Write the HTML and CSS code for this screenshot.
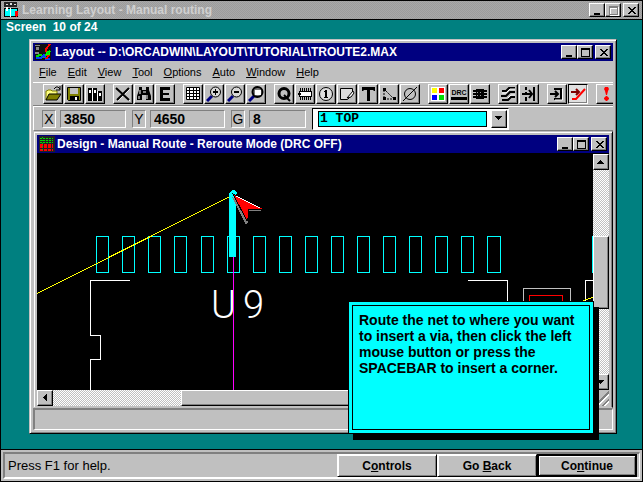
FILE: index.html
```html
<!DOCTYPE html>
<html lang="en">
<head>
<meta charset="utf-8">
<title>Learning Layout - Manual routing</title>
<link rel="stylesheet" href="styles.css">
</head>
<body>
<div class="app">
  <header class="app-title">
    <svg class="app-icon" width="16" height="16" viewBox="0 0 16 16" shape-rendering="crispEdges"><path d="M1 0h13v5H1z" fill="#222"/><path d="M3 2h2v1H3zM7 1h2v2H7zM11 2h2v1h-2z" fill="#ddd"/><path d="M1 6h5l2 1 2-1h4v8h-4l-2 1-2-1H1z" fill="#0ff" stroke="#000"/><path d="M7 6h1v9H7zM3 5h2v4H3z" fill="#fff"/><path d="M12 9h3v5h-1v1h-1v-1h-1z" fill="#f00"/></svg>
    <h1>Learning Layout - Manual routing</h1>
    <div class="caption-buttons">
      <button class="cap" aria-label="Minimize"><svg width="10" height="9"><path d="M1 7h6v2H1z"/></svg></button>
      <button class="cap off" aria-label="Maximize"><svg width="10" height="9"><path d="M0 0h9v9H0zM1 2v6h7V2z" fill-rule="evenodd"/></svg></button>
      <button class="cap close" aria-label="Close"><svg width="10" height="9"><path d="M1 1h2v1h1v1h2V2h1V1h2v1H8v1H7v1H6v1h1v1h1v1h1v1H7V7H6V6H4v1H3v1H1V7h1V6h1V5h1V4H3V3H2V2H1z"/></svg></button>
    </div>
  </header>

  <main class="desktop">
    <p class="progress">Screen&nbsp; 10 of 24</p>

    <section class="window">
      <header class="title-bar">
        <svg width="18" height="16" viewBox="0 0 18 16" shape-rendering="crispEdges"><path d="M0 0h16v16H0z" fill="#111"/><path d="M0 1h5v1H0zM1 3h3v3H1zM0 8h4v2H0z" fill="#888"/><path d="M1 12l5-1 3 2 3-3 3-3" stroke="#0d0" stroke-width="2" fill="none"/><circle cx="13" cy="9" r="2" fill="none" stroke="#0f0"/><path d="M1 14h5l3-3 2 4h4" stroke="#04f" stroke-width="2" fill="none"/><path d="M15 0l-4 5v3M14 11l-3 4" stroke="#f00" stroke-width="2" fill="none"/></svg>
        <h2>Layout -- D:\ORCADWIN\LAYOUT\TUTORIAL\TROUTE2.MAX</h2>
        <div class="caption-buttons">
          <button class="cap" aria-label="Minimize"><svg width="10" height="9"><path d="M1 7h6v2H1z"/></svg></button>
          <button class="cap" aria-label="Maximize"><svg width="10" height="9"><path d="M0 0h9v9H0zM1 2v6h7V2z" fill-rule="evenodd"/></svg></button>
          <button class="cap close" aria-label="Close"><svg width="10" height="9"><path d="M1 1h2v1h1v1h2V2h1V1h2v1H8v1H7v1H6v1h1v1h1v1h1v1H7V7H6V6H4v1H3v1H1V7h1V6h1V5h1V4H3V3H2V2H1z"/></svg></button>
        </div>
      </header>

      <nav class="menu">
        <button><u>F</u>ile</button><button><u>E</u>dit</button><button><u>V</u>iew</button><button><u>T</u>ool</button><button><u>O</u>ptions</button><button><u>A</u>uto</button><button><u>W</u>indow</button><button><u>H</u>elp</button>
      </nav>

      <div class="toolbar">
        <div class="group">
          <button aria-label="Open"><svg viewBox="0 0 16 16"><path d="M1 14V5h1l1-1h3l1 1h5v3" fill="#ffff80" stroke="#808000"/><path d="M1 14l3-6h12l-4 6z" fill="#808000" stroke="#000"/><path d="M9 3l2-2h2l2 2M15 0v4h-4" fill="none" stroke="#000"/></svg></button>
          <button aria-label="Save"><svg viewBox="0 0 16 16"><path d="M1.500 1.500h13v13h-12l-1-1z" fill="#808000" stroke="#000"/><path d="M4 2h8v6H4z" fill="#c0c0c0"/><path d="M4 10h9v4H4z"/><path d="M9 11h2v3H9z" fill="#fff"/></svg></button>
          <button aria-label="Library"><svg viewBox="0 0 16 16"><path d="M1 2h4v13H1zM6 2h4v13H6zM11 5h4v10h-4z"/><path d="M2 4h2v3H2zM7 4h2v3H7zM12 7h2v3h-2zM5 2h1v13H5zM10 5h1v10h-1z" fill="#fff"/></svg></button>
        </div>
        <div class="group">
          <button aria-label="Delete"><svg viewBox="0 0 16 16"><path d="M2 3l13 12M3 15L15 3" stroke="#fff"/><path d="M1 2l13 12M2 14L14 2" stroke="#000" stroke-width="2"/></svg></button>
          <button aria-label="Find"><svg viewBox="0 0 16 16"><path d="M3 1h3v3h4V1h3v3l2 6v4h-5V9H6v5H1v-4l2-6z"/><path d="M4 4v4M3 10v3M9 5v2M11 9v4M7 6h1" stroke="#fff" fill="none"/></svg></button>
          <button aria-label="Edit"><svg viewBox="0 0 16 16"><path d="M3 1h10v3H6v3h6v2H6v3h7v3H3z"/></svg></button>
        </div>
        <div class="group">
          <button aria-label="Spreadsheet"><svg viewBox="0 0 16 16"><path d="M2 2h13v12H2z" fill="#fff"/><path d="M1.500 1.500h13v12h-13zM1 4.500h14M1 7.500h14M1 10.500h14M4.500 1v13M8.500 1v13M11.500 1v13" fill="none" stroke="#000"/></svg></button>
          <button aria-label="Zoom in"><svg viewBox="0 0 16 16"><path d="M6 10l-5 5" stroke="#000080" stroke-width="3"/><circle cx="9.500" cy="6" r="5" fill="#d8d8d8" stroke="#000"/><path d="M9 3h1v6H9zM7 5h5v2H7z"/></svg></button>
          <button aria-label="Zoom out"><svg viewBox="0 0 16 16"><path d="M6 10l-5 5" stroke="#000080" stroke-width="3"/><circle cx="9.500" cy="6" r="5" fill="#d8d8d8" stroke="#000"/><path d="M7 5h5v2H7z"/></svg></button>
          <button aria-label="Zoom all"><svg viewBox="0 0 16 16"><path d="M6 10l-5 5" stroke="#000080" stroke-width="3"/><circle cx="9.500" cy="6" r="5" fill="#777" stroke="#000" stroke-width="2"/><path d="M7 4h6v5H7z" fill="#fff"/></svg></button>
        </div>
        <div class="group">
          <button aria-label="Query"><svg viewBox="0 0 16 16"><circle cx="8" cy="7.500" r="5" fill="none" stroke="#000" stroke-width="3"/><path d="M8 9l6 6" stroke="#000" stroke-width="2"/></svg></button>
          <button aria-label="Component"><svg viewBox="0 0 16 16" shape-rendering="crispEdges"><path d="M3.500 2v12M5.500 2v12M7.500 2v12M9.500 2v12M11.500 2v12M13.500 2v12" stroke="#000"/><path d="M2 5h13v6H2z"/><path d="M3 6h11v4H3z" fill="#fff"/><path d="M1 7h3v2H1z"/></svg></button>
          <button aria-label="Pin"><svg viewBox="0 0 16 16"><circle cx="8" cy="8" r="6.500" fill="#ddd" stroke="#000"/><path d="M7 4h2v7h1v1H6v-1h1V6H6V5h1z"/></svg></button>
          <button aria-label="Obstacle"><svg viewBox="0 0 16 16"><path d="M1.500 2.500h12v6l-5 5h-7z" fill="#ddd" stroke="#000"/><path d="M14 5l-6 7 4-1 3-4z" fill="#fff" stroke="#000"/></svg></button>
          <button aria-label="Text"><svg viewBox="0 0 16 16"><path d="M2 1h13v4h-1l-1-1h-3v11H7V4H4L3 5H2z"/></svg></button>
          <button aria-label="Connection"><svg viewBox="0 0 16 16"><path d="M3 4v9h11M3 3l10 10" fill="none" stroke="#000" stroke-dasharray="2 1"/><path d="M2 2h3v3H2zM2 11h3v3H2zM12 11h3v3h-3z"/></svg></button>
          <button aria-label="Error"><svg viewBox="0 0 16 16"><circle cx="8" cy="8" r="5.500" fill="none" stroke="#000"/><path d="M1 15L15 1" stroke="#000"/></svg></button>
        </div>
        <div class="group">
          <button aria-label="Color"><svg viewBox="0 0 16 16"><path d="M1 1h14v14H1z" fill="#fff"/><path d="M2 2h5v5H2z" fill="#ff0"/><path d="M9 2h5v5H9z" fill="#f00"/><path d="M2 9h5v5H2z" fill="#00f"/><path d="M9 9h5v5H9z" fill="#0d0"/></svg></button>
          <button class="drc"><span>DRC</span></button>
          <button aria-label="Reconnect"><svg viewBox="0 0 16 16" shape-rendering="crispEdges"><path d="M1 4h14v2H1zM1 7h14v2H1zM1 10h14v2H1zM4 3h8v10H4z"/><path d="M5 6.500h1M8 6.500h1M5 9.500h1M8 9.500h1" stroke="#999"/></svg></button>
        </div>
        <div class="group">
          <button aria-label="Auto path route"><svg viewBox="0 0 16 16"><path d="M2 5h4l3-3h6M1 10h5l4-4h5M2 14h6l3-3h4" fill="none" stroke="#000" stroke-width="2"/><path d="M2 7h4l4-4h5M8 12l3-3h4" fill="none" stroke="#fff"/></svg></button>
          <button aria-label="Shove track"><svg viewBox="0 0 16 16"><path d="M5 1v3M5 6v3M5 11v4M13 1v14" stroke="#000" stroke-width="2"/><path d="M1 8h10M8 4l3 4-3 4" fill="none" stroke="#000" stroke-width="2"/></svg></button>
        </div>
        <div class="group">
          <button aria-label="Edit segment"><svg viewBox="0 0 16 16"><path d="M5 3h7v10H5M1 8h8M6 5l3 3-3 3" fill="none" stroke="#000" stroke-width="2"/><path d="M13.500 3v11H6" fill="none" stroke="#fff"/></svg></button>
          <button class="pressed" aria-label="Add/Edit route"><svg viewBox="0 0 16 16"><path d="M1 6h8M6 3l3 3-3 3" fill="none" stroke="#800000" stroke-width="2"/><path d="M2 13h4l9-10" fill="none" stroke="#f00" stroke-width="2"/></svg></button>
        </div>
        <div class="group">
          <button aria-label="Design rule check"><svg viewBox="0 0 16 16"><path d="M7 1h3l1 2-1 2-1 4H8L7 5 6 3zM7 11l1-1h1l2 2v1l-2 2H8l-2-2v-1z" fill="#f00"/></svg></button>
        </div>
      </div>

      <div class="coords">
        <label for="x">X</label><input id="x" class="w-x" value="3850">
        <label for="y">Y</label><input id="y" class="w-y" value="4650">
        <label for="g">G</label><input id="g" class="w-g" value="8">
        <div class="layer">
          <select aria-label="Layer"><option>1 TOP</option></select>
          <span class="drop" aria-hidden="true"><svg width="8" height="5"><path d="M0 0h7v1H6v1H5v1H4v1H3V3H2V2H1V1H0z"/></svg></span>
        </div>
      </div>

      <section class="design">
        <header class="title-bar">
          <svg width="16" height="16" viewBox="0 0 16 16" shape-rendering="crispEdges"><path d="M0 0h16v16H0z" fill="#222"/><path d="M1 2h13M1 4h13M1 6h13" stroke="#0d0" stroke-dasharray="2 1"/><path d="M1 9h13M1 11h13M1 14h13" stroke="#f00" stroke-width="2" stroke-dasharray="3 1"/><path d="M3 1v14" stroke="#0c0" stroke-dasharray="1 2"/></svg>
          <h2>Design - Manual Route - Reroute Mode (DRC OFF)</h2>
          <div class="caption-buttons">
            <button class="cap" aria-label="Minimize"><svg width="10" height="9"><path d="M1 7h6v2H1z"/></svg></button>
            <button class="cap" aria-label="Maximize"><svg width="10" height="9"><path d="M0 0h9v9H0zM1 2v6h7V2z" fill-rule="evenodd"/></svg></button>
            <button class="cap close" aria-label="Close"><svg width="10" height="9"><path d="M1 1h2v1h1v1h2V2h1V1h2v1H8v1H7v1H6v1h1v1h1v1h1v1H7V7H6V6H4v1H3v1H1V7h1V6h1V5h1V4H3V3H2V2H1z"/></svg></button>
          </div>
        </header>
        <div class="view">
          <svg class="board" shape-rendering="crispEdges">
            <g transform="translate(-37 -154)" fill="none">
              <path stroke="#0ff" d="M96.500 236.500h12v36h-12zM122.500 236.500h12v36h-12zM148.500 236.500h12v36h-12zM174.500 236.500h12v36h-12zM201.500 236.500h12v36h-12zM227.500 236.500h12v36h-12zM253.500 236.500h12v36h-12zM279.500 236.500h12v36h-12zM305.500 236.500h12v36h-12zM331.500 236.500h12v36h-12zM357.500 236.500h12v36h-12zM383.500 236.500h12v36h-12zM409.500 236.500h12v36h-12zM435.500 236.500h12v36h-12zM461.500 236.500h12v36h-12zM487.500 236.500h13v36h-13zM592.500 236v37"/>
              <path stroke="#fff" d="M130 280.500H90.500V335.500H100.500V359.500H90.500V391M468 280.500H507.500V391M593 280.500H585.500V391"/>
              <path stroke="#c0c0c0" d="M523.500 391V288.500H570.500V391"/>
              <path stroke="#f00" d="M529.500 391V295.500H562.500V391"/>
              <path stroke="#ff0" d="M37 293.500L232 195.500M583 300.500L593 297.500"/>
              <text class="refdes" y="318"><tspan x="211">U</tspan><tspan x="243">9</tspan></text>
              <path stroke="#f0f" d="M233.500 257V391"/>
              <path fill="#0ff" d="M229 257V193l3-3h2l3 3-1 2v62z"/>
              <path fill="#808080" d="M232 197l14 28 2-3-9-20 11 9h11v-2z"/>
              <path fill="#f00" stroke="#000" d="M233 194l30 15h-15l-1 12z"/>
              <path fill="#f00" d="M235 196l28 13h-15v10z"/>
              <path stroke="#fff" d="M236 196l24 12"/>
            </g>
          </svg>
          <div class="vscroll">
            <button class="arrow" aria-label="Scroll up"><svg width="8" height="5"><path d="M3 0h1v1h1v1h1v1h1v1H0V3h1V2h1V1h1z"/></svg></button>
            <div class="thumb"></div>
            <button class="arrow" aria-label="Scroll down"><svg width="8" height="5"><path d="M0 0h7v1H6v1H5v1H4v1H3V3H2V2H1V1H0z"/></svg></button>
          </div>
          <div class="hscroll">
            <button class="arrow" aria-label="Scroll left"><svg width="5" height="8"><path d="M0 3h1V2h1V1h1V0h1v7H3V6H2V5H1V4H0z"/></svg></button>
            <div class="thumb"></div>
            <button class="arrow" aria-label="Scroll right"><svg width="5" height="8"><path d="M0 0h1v1h1v1h1v1h1v1H3v1H2v1H1v1H0z"/></svg></button>
          </div>
          <div class="grip"></div>
        </div>
      </section>
      <div class="status"></div>
    </section>

    <aside class="hint"><p>Route the net to where you want to insert a via, then click the left mouse button or press the SPACEBAR to insert a corner.</p></aside>
  </main>

  <footer class="footer">
    <div class="footer-panel">
      <p>Press F1 for help.</p>
      <div class="actions">
        <button>C<u>o</u>ntrols</button>
        <button>Go <u>B</u>ack</button>
        <button class="default">Co<u>n</u>tinue</button>
      </div>
    </div>
  </footer>
</div>
</body>
</html>
```

FILE: styles.css
```css
* { box-sizing: border-box; }
body {
  margin: 0;
  font: 12px/16px "Liberation Sans", Arial, sans-serif;
  color: #000;
}
h1, h2, p { margin: 0; font-size: inherit; }
button, input, select { font: inherit; color: inherit; padding: 0; margin: 0; border-radius: 0; }
button { background: #c0c0c0; border: 0; }
u { text-underline-offset: 1px; }
svg { display: block; flex: none; }

.app {
  min-height: 100vh;
  display: flex;
  flex-direction: column;
  border: 1px solid #000;
  background: #008080;
}
.app-title {
  display: flex;
  align-items: center;
  height: 19px;
  padding: 0 3px 0 2px;
  background: repeating-conic-gradient(#a8a8a8 0 25%, #9c9c9c 0 50%) 0 0 / 2px 2px;
  border-bottom: 1px solid #000;
}
.app-title h1 { flex: 1; padding-left: 3px; color: #d0d0d0; }

.caption-buttons { display: flex; }
.cap {
  width: 16px;
  height: 14px;
  padding: 2px 3px;
  border: 1px solid;
  border-color: #fff #000 #000 #fff;
  box-shadow: inset -1px -1px #808080;
}
.cap.close { margin-left: 2px; }
.cap.off svg { fill: #808080; filter: drop-shadow(1px 1px #fff); }

.desktop {
  position: relative;
  flex: 1;
  display: flex;
  flex-direction: column;
  padding: 0 25px 15px 28px;
}
.progress { margin-left: -23px; height: 19px; line-height: 15px; color: #fff; font-weight: bold; }

.window {
  flex: 1;
  display: flex;
  flex-direction: column;
  background: #c0c0c0;
  border: 1px solid;
  border-color: #c0c0c0 #000 #000 #c0c0c0;
  box-shadow: inset 1px 1px #fff, inset -1px -1px #808080;
  padding: 3px;
}
.title-bar {
  display: flex;
  align-items: center;
  height: 18px;
  padding: 0 2px;
  background: #000080;
  color: #fff;
}
.title-bar h2 { flex: 1; padding-left: 2px; white-space: nowrap; overflow: hidden; }

.menu { display: flex; height: 21px; padding-left: 6px; gap: 11px; font-size: 11px; }

.toolbar {
  display: flex;
  gap: 7px;
  height: 24px;
  padding: 1px 0 1px 10px;
  overflow: hidden;
  border-top: 1px solid #fff;
  border-bottom: 1px solid #808080;
}
.group { display: flex; flex: none; gap: 1px; padding-right: 1px; }
.toolbar button {
  width: 20px;
  height: 20px;
  display: flex;
  align-items: center;
  justify-content: center;
  border: 1px solid;
  border-color: #fff #000 #000 #fff;
  box-shadow: inset -1px -1px #808080;
}
.toolbar svg { width: 16px; height: 16px; }
.toolbar .pressed { background: #e0e0e0; border-color: #000 #fff #fff #000; }
.drc span { font-size: 7px; line-height: 9px; font-weight: bold; border-bottom: 3px solid #000; }

.coords {
  display: flex;
  align-items: center;
  height: 25px;
  padding: 0 8px;
  border-top: 1px solid #fff;
  border-left: 1px solid #fff;
  border-bottom: 1px solid #808080;
  font-size: 14px;
}
.coords label, .coords input {
  height: 18px;
  line-height: 16px;
  border: 1px solid;
  border-color: #808080 #fff #fff #808080;
}
.coords label { width: 14px; margin-right: 4px; text-align: center; }
.coords input { margin-right: 6px; padding-left: 3px; background: none; font-family: "Liberation Sans", sans-serif; font-weight: bold; }
.w-x { width: 66px; }
.w-y { width: 75px; }
.w-g { width: 57px; }
.layer {
  display: flex;
  justify-content: space-between;
  width: 197px;
  height: 22px;
  padding: 1px 1px 1px 5px;
  background: #fff;
  border: 1px solid;
  border-color: #000 #fff #fff #000;
}
.layer select {
  appearance: none;
  width: 169px;
  height: 16px;
  margin-top: 1px;
  padding-left: 1px;
  background: #0ff;
  border: 1px solid #000;
  font: bold 13px/14px "Liberation Mono", monospace;
}
.drop, .arrow {
  width: 16px;
  height: 16px;
  flex: none;
  display: flex;
  align-items: center;
  justify-content: center;
  background: #c0c0c0;
  border: 1px solid;
  border-color: #fff #000 #000 #fff;
  box-shadow: inset -1px -1px #808080;
}
.drop { height: 18px; }

.design {
  flex: 1;
  display: flex;
  flex-direction: column;
  padding: 3px 3px 1px;
  border: 1px solid;
  border-color: #c0c0c0 #000 #c0c0c0 #c0c0c0;
  box-shadow: inset 1px 1px #fff, inset -1px 0 #808080;
}
.view {
  flex: 1;
  display: grid;
  grid-template: 1fr 16px / 1fr 16px;
  border-top: 1px solid #000;
}
.board { width: 100%; height: 100%; background: #000; overflow: hidden; }
.refdes { fill: #fff; font: 300 38px Roboto, sans-serif; }
.vscroll, .hscroll {
  display: flex;
  background: repeating-conic-gradient(#fff 0 25%, #c0c0c0 0 50%) 0 0 / 2px 2px;
}
.vscroll { flex-direction: column; justify-content: space-between; }
.hscroll { justify-content: space-between; }
.thumb {
  background: #c0c0c0;
  border: 1px solid;
  border-color: #fff #000 #000 #fff;
  box-shadow: inset -1px -1px #808080;
}
.vscroll .thumb { height: 73px; }
.hscroll .thumb { width: 268px; }
.grip { background: repeating-linear-gradient(135deg, #c0c0c0 0 2px, #808080 2px 4px, #fff 4px 5px); clip-path: polygon(100% 0, 100% 100%, 0 100%); }

.status {
  height: 22px;
  border: 2px solid;
  border-color: #808080 #fff #fff #808080;
  border-right-width: 1px;
  border-bottom-width: 1px;
}

.hint {
  position: absolute;
  right: 48px;
  bottom: 15px;
  width: 246px;
  height: 133px;
  padding: 3px;
  background: #0ff;
  border: 1px solid #000;
  box-shadow: 5px 6px #000;
}
.hint p {
  height: 100%;
  padding: 6px 4px 6px 6px;
  border: 1px solid #000;
  font-size: 14px;
  font-weight: bold;
}

.footer {
  height: 32px;
  padding: 2px;
  background: #c0c0c0;
  border-top: 1px solid #000;
}
.footer-panel {
  display: flex;
  align-items: center;
  padding: 0 2px 0 3px;
  border: 2px solid;
  border-color: #808080 #fff #fff #808080;
  border-right-width: 1px;
}
.footer p { flex: 1; font-size: 13px; }
.actions { display: flex; }
.actions button {
  width: 100px;
  height: 23px;
  font-weight: bold;
  border: 1px solid;
  border-color: #fff #000 #000 #fff;
  box-shadow: inset 1px 1px #fff, inset -1px -1px #808080;
}
.actions .default { border: 2px solid #000; }
```
